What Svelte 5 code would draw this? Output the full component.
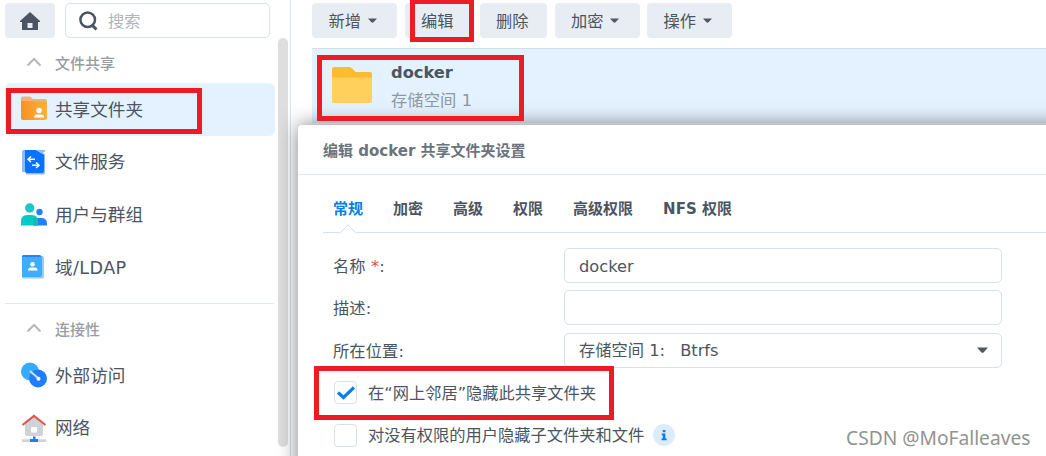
<script lang="ts">
  type Item = { id: string; label: string };

  const groups: { title: string; items: Item[] }[] = [
    {
      title: '文件共享',
      items: [
        { id: 'share', label: '共享文件夹' },
        { id: 'service', label: '文件服务' },
        { id: 'users', label: '用户与群组' },
        { id: 'ldap', label: '域/LDAP' },
      ],
    },
    {
      title: '连接性',
      items: [
        { id: 'external', label: '外部访问' },
        { id: 'network', label: '网络' },
      ],
    },
  ];

  const actions = [
    { label: '新增', menu: true },
    { label: '编辑', menu: false },
    { label: '删除', menu: false },
    { label: '加密', menu: true },
    { label: '操作', menu: true },
  ];

  const tabs = ['常规', '加密', '高级', '权限', '高级权限', 'NFS 权限'];

  let selected = $state('share');
  let activeTab = $state('常规');
  let hideNetwork = $state(true);
  let hideSub = $state(false);
</script>

{#snippet caret(width: number)}
  <svg class="caret" {width} height={width * 0.6} viewBox="0 0 10 6">
    <path d="M0 .5h10L6.2 4.8q-1.2 1-2.4 0z" fill="#505a64" />
  </svg>
{/snippet}

{#snippet itemIcon(id: string)}
  <svg class="item-icon" width="26" height="28" viewBox="0 0 26 28">
    {#if id === 'share'}
      <defs>
        <linearGradient id="orange" x1="0" y1="0" x2="1" y2="0">
          <stop offset="0" stop-color="#fb911f" />
          <stop offset="1" stop-color="#ffb03d" />
        </linearGradient>
      </defs>
      <path d="M0 3.500q0-2 2-2h7l3 2.500h12q2 0 2 2v4H0z" fill="#f3b473" />
      <path d="M0 6h26v17q0 2-2 2H2q-2 0-2-2z" fill="url(#orange)" />
      <circle cx="18" cy="15.500" r="2.800" fill="#fff" />
      <path d="M13 22q0-2.500 3-2.500h4q3 0 3 2.500v.5H13z" fill="#fff" />
    {:else if id === 'service'}
      <path d="M1 3.500Q1 2 2.500 2H14l10 4v19q0 1.500-1.500 1.500H5V24H1z" fill="#8cbcff" />
      <path d="M4 2h11l8 5v16q0 2-2 2H6q-2 0-2-2z" fill="#0b72ff" />
      <path d="M15 2h9v1.500l-3 2z" fill="#8cbcff" />
      <path d="M10 8.500 7 11.200 10 14M7.500 11.200h6.500M15 14.500 18 17.200 15 20M17.500 17.200H11" fill="none" stroke="#fff" stroke-width="1.500" />
    {:else if id === 'users'}
      <circle cx="18.500" cy="12" r="3.200" fill="#227fff" />
      <path d="M13 25.500V20q0-2 3-2h4q6 0 6 5.500v2z" fill="#227fff" />
      <circle cx="8.700" cy="8" r="4.700" fill="#1ac9c5" />
      <path d="M0 25.500V21.500q0-6.500 6-6.500h5q6 0 6 6.500v4z" fill="#00cbc6" />
      <path d="M12 18h3q2 1.500 2 4v3.500h-5z" fill="#16b8b8" />
    {:else if id === 'ldap'}
      <rect x="1" y="3" width="22" height="22.500" rx="1.500" fill="#8cd0ff" />
      <path d="M2 2h17q1.500 0 1.500 2.500H1V3z" fill="#2281ff" />
      <path d="M1 4.500h20V22q0 2-2 2H1z" fill="#3fadfc" />
      <circle cx="11.500" cy="11.300" r="2.200" fill="#fff" />
      <path d="M7 17.500q0-3 3-3h3.500q3 0 3 3z" fill="#fff" />
    {:else if id === 'external'}
      <circle cx="9" cy="10.500" r="9" fill="#37aafd" />
      <circle cx="17" cy="17.500" r="9" fill="#1f7dff" />
      <path d="m9 10 8.500 7.500" fill="none" stroke="#c5e2ff" stroke-width="2" />
      <circle cx="17.500" cy="17.800" r="2" fill="#fff" />
    {:else}
      <path d="M4 9.500l9-7 9 7V20q0 2-2 2H6q-2 0-2-2z" fill="#cfd2d6" />
      <rect x="10" y="13" width="6" height="5.500" rx="1" fill="#fff" />
      <path d="M1.500 11 13 1.800 24.500 11" fill="none" stroke="#e2564f" stroke-width="2.200" />
      <path d="M1 25.300h24V28H1z" fill="#cfd2d6" />
      <path d="M12 22.500h2.500V25H17v3H9v-3h3z" fill="#1f7dff" />
    {/if}
  </svg>
{/snippet}

{#snippet checkbox(checked: boolean)}
  <i class="box">
    {#if checked}
      <svg width="18" height="14" viewBox="0 0 18 14">
        <path d="m1 6.500 5.500 5L17 1.500" fill="none" stroke="#057feb" stroke-width="3.200" />
      </svg>
    {/if}
  </i>
{/snippet}

<div class="desktop">
  <aside class="sidebar">
    <div class="top">
      <button class="home" aria-label="home">
        <svg width="20" height="18" viewBox="0 0 20 18">
          <path d="M10 0 20 9v1h-2v8H2v-8H0V9z" fill="#4a5561" />
          <path d="M7.500 11h5v5h-5z" fill="#e8edf4" />
        </svg>
      </button>
      <div class="search">
        <svg width="20" height="20" viewBox="0 0 20 20" fill="none" stroke="#4a5561">
          <circle cx="8.700" cy="8.800" r="7.300" stroke-width="2.500" />
          <path d="m12.500 13.500 5 5" stroke-width="3" />
        </svg>
        <span>搜索</span>
      </div>
    </div>

    {#each groups as group}
      <section class="group">
        <h4>
          <svg width="16" height="10" viewBox="0 0 16 10">
            <path d="m1.500 8.500 6.500-6.500 6.500 6.500" fill="none" stroke="#b3b8bd" stroke-width="2" />
          </svg>
          {group.title}
        </h4>
        {#each group.items as item}
          <button class="item" class:selected={selected === item.id} onclick={() => (selected = item.id)}>
            {@render itemIcon(item.id)}
            <span class:latin={item.id === 'ldap'}>{item.label}</span>
          </button>
        {/each}
      </section>
    {/each}
    <div class="scrollbar"></div>
  </aside>

  <main class="content">
    <div class="toolbar">
      {#each actions as action}
        <button class="action" class:plain={!action.menu}>
          <span>{action.label}</span>
          {#if action.menu}{@render caret(9)}{/if}
        </button>
      {/each}
    </div>
    <div class="share-row">
      <svg width="40" height="36" viewBox="0 0 40 36">
        <path d="M0 2q0-2 2-2h15q1.500 0 2.500 1l4 4H38q2 0 2 2v6H0z" fill="#fdbb2f" />
        <path d="M0 10.500h40V34q0 2-2 2H2q-2 0-2-2z" fill="#ffd05b" />
      </svg>
      <div class="share-text">
        <strong>docker</strong>
        <span>存储空间 1</span>
      </div>
    </div>
  </main>

  <div class="dialog">
    <header>编辑 docker 共享文件夹设置</header>
    <nav>
      {#each tabs as tab}
        <button class="tab" class:active={tab === activeTab} onclick={() => (activeTab = tab)}>
          {tab}
          {#if tab === activeTab}
            <svg class="notch" width="16" height="9" viewBox="0 0 16 9">
              <path d="M0 9 8 0l8 9z" fill="#fff" />
              <path d="M.5 8.500 8 .8l7.500 7.700" fill="none" stroke="#d5e1eb" />
            </svg>
          {/if}
        </button>
      {/each}
    </nav>
    <div class="form">
      <div class="field">
        <span class="name">名称 <em>*</em>:</span>
        <div class="input">docker</div>
      </div>
      <div class="field">
        <span class="name">描述:</span>
        <div class="input"></div>
      </div>
      <div class="field">
        <span class="name">所在位置:</span>
        <div class="input select">
          <span class="volume">存储空间 1: <span>Btrfs</span></span>
          {@render caret(11)}
        </div>
      </div>
      <button class="check" onclick={() => (hideNetwork = !hideNetwork)}>
        {@render checkbox(hideNetwork)}
        <span>在“网上邻居”隐藏此共享文件夹</span>
      </button>
      <button class="check" onclick={() => (hideSub = !hideSub)}>
        {@render checkbox(hideSub)}
        <span>对没有权限的用户隐藏子文件夹和文件</span>
        <svg class="info" width="22" height="22" viewBox="0 0 22 22">
          <circle cx="11" cy="11" r="11" fill="#dcecfd" />
          <path d="M9.800 6h2.600v2.300H9.800zM8.700 9.500h3.700v5h1.300v1.800H8.500v-1.800h1.300v-3.200H8.700z" fill="#057feb" />
        </svg>
      </button>
    </div>
  </div>

  <!-- highlight frames laid over the page -->
  <div class="mark mark-menu"></div>
  <div class="mark mark-edit"></div>
  <div class="mark mark-share"></div>
  <div class="mark mark-hide"></div>
  <div class="watermark">CSDN @MoFalleaves</div>
</div>

<style>
  :global(body) {
    background: #fff;
  }
  .desktop {
    position: relative;
    display: flex;
    width: 1046px;
    height: 456px;
    overflow: hidden;
    font-family: 'DejaVu Sans', 'Noto Sans CJK SC', sans-serif;
    font-size: 16.25px;
    color: #4b555f;
  }
  .desktop * {
    box-sizing: border-box;
  }
  button {
    border: 0;
    padding: 0;
    background: none;
    font: inherit;
    color: inherit;
    white-space: nowrap;
  }

  .sidebar {
    position: relative;
    flex: none;
    width: 291px;
    height: 456px;
    padding: 3px 16px 0 5px;
    border-right: 1px solid #d8e2ec;
  }
  .top {
    display: flex;
    gap: 10px;
    height: 35px;
  }
  .home {
    display: grid;
    place-items: center;
    width: 50px;
    border-radius: 4px;
    background: #e8edf4;
  }
  .search {
    display: flex;
    align-items: center;
    gap: 9px;
    width: 205px;
    padding-left: 13px;
    border: 1px solid #d5e1eb;
    border-radius: 5px;
    color: #b0b5bb;
  }
  .search span {
    padding-bottom: 2px;
  }
  .group h4 {
    display: flex;
    align-items: center;
    gap: 13px;
    height: 40px;
    margin: 4px 0 1px;
    padding-left: 21px;
    font-size: 15px;
    font-weight: 500;
    color: #979da3;
  }
  .group + .group {
    margin-top: 10px;
    border-top: 1px solid #e1e8ef;
  }
  .item {
    display: flex;
    align-items: center;
    gap: 8px;
    width: 270px;
    height: 52.5px;
    padding-left: 16px;
    border-radius: 6px;
    font-size: 17.6px;
  }
  .item span {
    padding-bottom: 2px;
  }
  .item .latin {
    padding-bottom: 1px;
    letter-spacing: 0.4px;
  }
  .item.selected {
    background: #e4f1fe;
  }
  .scrollbar {
    position: absolute;
    top: 38px;
    right: 2px;
    width: 10px;
    height: 409px;
    border-radius: 5px;
    background: #dedede;
  }

  .content {
    flex: 1;
    padding: 3px 0 0 21px;
  }
  .toolbar {
    display: flex;
    gap: 7.5px;
    height: 35px;
  }
  .action {
    display: flex;
    align-items: center;
    gap: 6.5px;
    width: 85px;
    padding-left: 16.5px;
    border-radius: 4px;
    background: #e8edf4;
  }
  .action.plain {
    width: 67.5px;
  }
  .action span {
    padding-bottom: 2px;
  }
  .share-row {
    display: flex;
    gap: 19px;
    height: 75px;
    margin-top: 10px;
    padding: 18px 0 0 20px;
    border-top: 1px solid #cfdfe9;
    background: #e4f1fe;
  }
  .share-text {
    display: flex;
    flex-direction: column;
    gap: 4px;
    margin-top: -6px;
    line-height: 24px;
  }
  .share-text span {
    color: #8c98a4;
    letter-spacing: 0.1px;
  }

  .dialog {
    position: absolute;
    top: 125px;
    left: 298px;
    width: 780px;
    height: 380px;
    border-radius: 4px 0 0 0;
    background: #fff;
    box-shadow: 0 0 20px rgba(0, 0, 0, 0.5);
  }
  .dialog header {
    height: 50px;
    padding-left: 25px;
    border-bottom: 1px solid #dce7ef;
    line-height: 52px;
    font-size: 15px;
    font-weight: bold;
    color: #6a747e;
  }
  nav {
    display: flex;
    gap: 30px;
    height: 58px;
    margin-left: 25px;
    padding-left: 10px;
    border-bottom: 1px solid #d5e1eb;
  }
  .tab {
    position: relative;
    padding-top: 8px;
    font-size: 15px;
    font-weight: bold;
  }
  .tab.active {
    color: #057feb;
  }
  .notch {
    position: absolute;
    bottom: -1px;
    left: 7px;
  }
  .form {
    display: flex;
    flex-direction: column;
    gap: 7.4px;
    padding: 15px 0 0 35px;
  }
  .field {
    display: flex;
    height: 35px;
    line-height: 37px;
  }
  .name {
    width: 231px;
    letter-spacing: 0.1px;
  }
  .name em {
    font-style: normal;
    color: #e64b4b;
  }
  .input {
    width: 438px;
    padding: 0 13px 0 14px;
    border: 1px solid #d5e1eb;
    border-radius: 5px;
    line-height: 35px;
  }
  .select {
    display: flex;
    align-items: center;
    justify-content: space-between;
  }
  .volume {
    padding-top: 1px;
  }
  .volume span {
    margin-left: 10px;
  }
  .check {
    display: flex;
    align-items: center;
    height: 35px;
  }
  .check span {
    padding-bottom: 2px;
  }
  .box {
    display: grid;
    place-items: center;
    width: 23px;
    height: 23px;
    margin: 0 11px 0 1px;
    border: 1px solid #d5e1eb;
    border-radius: 4px;
  }
  .info {
    margin-left: 9px;
  }

  .mark {
    position: absolute;
    border: 5px solid #ed1c24;
    pointer-events: none;
  }
  .mark-menu {
    top: 88px;
    left: 6px;
    width: 196px;
    height: 46px;
  }
  .mark-edit {
    top: -1px;
    left: 410px;
    width: 64px;
    height: 43px;
  }
  .mark-share {
    top: 55px;
    left: 317px;
    width: 207px;
    height: 66px;
  }
  .mark-hide {
    top: 366px;
    left: 314px;
    width: 300px;
    height: 54px;
  }
  .watermark {
    position: absolute;
    top: 425px;
    left: 846px;
    font: 19.2px/26px 'Noto Sans', sans-serif;
    color: #929292;
    white-space: nowrap;
  }
</style>
